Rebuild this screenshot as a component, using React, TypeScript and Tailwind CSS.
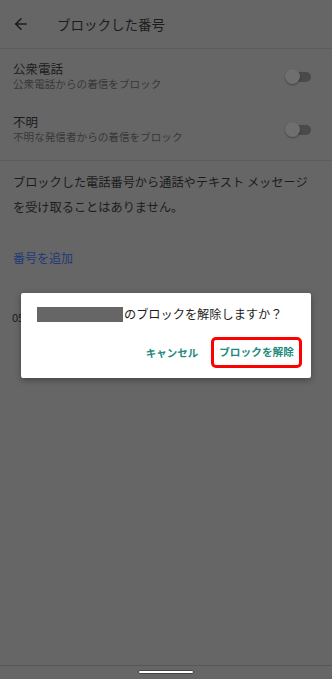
import React from "react";
import { ArrowLeft } from "lucide-react";

const font = { fontFamily: '"Noto Sans CJK JP", "Noto Sans", sans-serif' };

const Toggle = () => (
  <div className="relative w-[26px] h-[14px] flex items-center">
    <div className="absolute right-0 w-[22px] h-[10px] rounded-full bg-[#4a4a4a]" />
    <div className="absolute left-0 w-[15px] h-[15px] rounded-full bg-[#6f6f6f] shadow-[0_1px_2px_rgba(0,0,0,0.35)]" />
  </div>
);

const rows = [
  { title: "公衆電話", sub: "公衆電話からの着信をブロック" },
  { title: "不明", sub: "不明な発信者からの着信をブロック" },
];

export default function App() {
  return (
    <div className="relative w-[332px] h-[679px] bg-[#666666] overflow-hidden" style={font}>
      {/* header */}
      <div className="h-[49px] flex items-center border-b border-[#5c5c5c]">
        <ArrowLeft size={18} strokeWidth={2} className="ml-[12px] text-[#1c1c1c]" />
        <span className="ml-[27px] text-[13.5px] text-[#1c1c1c]">ブロックした番号</span>
      </div>

      <div className="border-b border-[#5c5c5c] pb-[5px]">
        {rows.map((r, i) => (
          <div key={i} className="flex items-center justify-between pl-[13px] pr-[21px] pt-[13px] pb-[11px]">
            <div className="flex flex-col gap-[1px]">
              <span className="block text-[12.5px] leading-[14px] text-[#1c1c1c]">{r.title}</span>
              <span className="block text-[10.6px] leading-[14px] text-[#383838]">{r.sub}</span>
            </div>
            <Toggle />
          </div>
        ))}
      </div>

      <p className="px-[13px] pt-[9px] text-[12.2px] leading-[25px] text-[#1c1c1c]">
        ブロックした電話番号から通話やテキスト メッセージを受け取ることはありません。
      </p>

      <div className="px-[13px] pt-[30px] text-[12px] leading-[16px] text-[#1e3a78]">番号を追加</div>

      <div className="px-[12px] pt-[44px] text-[11px] leading-[14px] text-[#1c1c1c]">050-0000-0000</div>

      {/* dialog */}
      <div className="absolute left-[21px] top-[293px] w-[290px] h-[85px] bg-white rounded-[2px] shadow-[0_2px_6px_rgba(0,0,0,0.35)] flex flex-col">
        <div className="flex items-center pl-[16px] pt-[14px]">
          <div className="w-[86px] h-[15px] bg-[#666666]" />
          <span className="ml-[1px] text-[12.2px] leading-[15px] text-[#1e1e1e]">のブロックを解除しますか？</span>
        </div>
        <div className="flex items-center justify-end gap-[13px] pr-[9px] mt-auto mb-[10px]">
          <span className="text-[10.5px] font-bold text-[#208a7c]">キャンセル</span>
          <div className="border-[3px] border-[#ff0000] rounded-[5px] px-[5px] h-[31px] flex items-center">
            <span className="text-[10.7px] font-bold text-[#208a7c]">ブロックを解除</span>
          </div>
        </div>
      </div>

      {/* nav bar */}
      <div className="absolute bottom-0 left-0 w-full h-[14px] border-t border-[#575757] flex justify-center pt-[4px]">
        <div className="w-[56px] h-[4px] rounded-full bg-white border border-[#444444]" />
      </div>
    </div>
  );
}
